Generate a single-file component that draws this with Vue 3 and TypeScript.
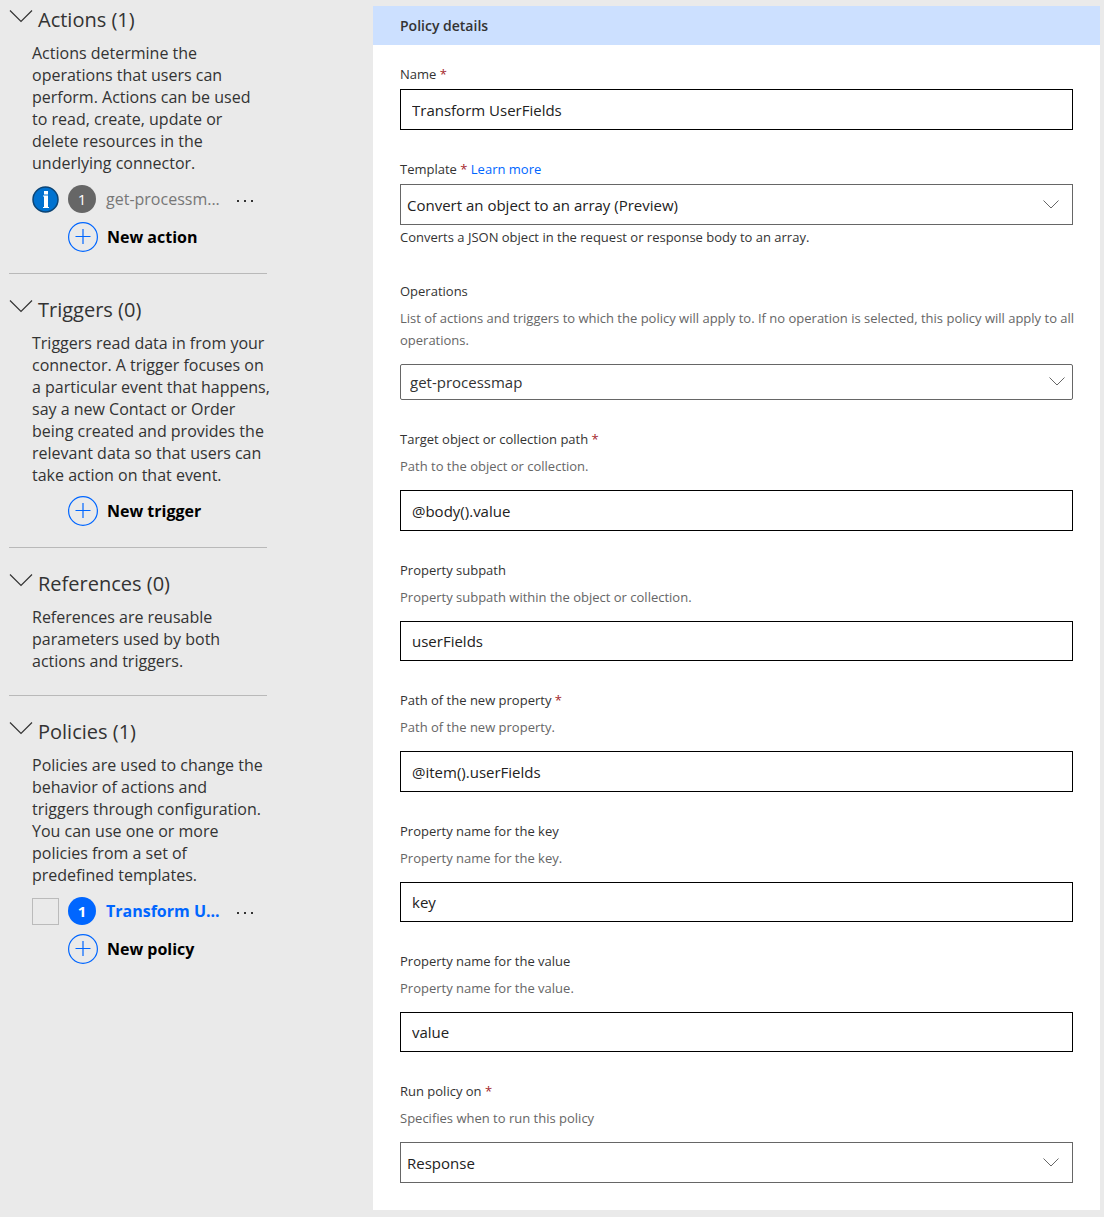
<script setup lang="ts">
import { ref } from 'vue'

interface Item {
  label: string
  active: boolean
}

interface Section {
  title: string
  lines: string[]
  items: Item[]
  add?: string
}

interface Field {
  id: string
  label: string
  required: boolean
  description: string
  value: string
}

const sections: Section[] = [
  {
    title: 'Actions (1)',
    lines: [
      'Actions determine the',
      'operations that users can',
      'perform. Actions can be used',
      'to read, create, update or',
      'delete resources in the',
      'underlying connector.',
    ],
    items: [{ label: 'get-processm...', active: false }],
    add: 'New action',
  },
  {
    title: 'Triggers (0)',
    lines: [
      'Triggers read data in from your',
      'connector. A trigger focuses on',
      'a particular event that happens,',
      'say a new Contact or Order',
      'being created and provides the',
      'relevant data so that users can',
      'take action on that event.',
    ],
    items: [],
    add: 'New trigger',
  },
  {
    title: 'References (0)',
    lines: ['References are reusable', 'parameters used by both', 'actions and triggers.'],
    items: [],
  },
  {
    title: 'Policies (1)',
    lines: [
      'Policies are used to change the',
      'behavior of actions and',
      'triggers through configuration.',
      'You can use one or more',
      'policies from a set of',
      'predefined templates.',
    ],
    items: [{ label: 'Transform U...', active: true }],
    add: 'New policy',
  },
]

const name = ref('Transform UserFields')

const fields = ref<Field[]>([
  {
    id: 'target',
    label: 'Target object or collection path',
    required: true,
    description: 'Path to the object or collection.',
    value: '@body().value',
  },
  {
    id: 'subpath',
    label: 'Property subpath',
    required: false,
    description: 'Property subpath within the object or collection.',
    value: 'userFields',
  },
  {
    id: 'newpath',
    label: 'Path of the new property',
    required: true,
    description: 'Path of the new property.',
    value: '@item().userFields',
  },
  {
    id: 'key',
    label: 'Property name for the key',
    required: false,
    description: 'Property name for the key.',
    value: 'key',
  },
  {
    id: 'value',
    label: 'Property name for the value',
    required: false,
    description: 'Property name for the value.',
    value: 'value',
  },
])
</script>

<template>
  <div class="page">
    <aside class="sidebar">
      <section v-for="s in sections" :key="s.title" class="section">
        <h2 class="heading">
          <svg class="caret" viewBox="0 0 24 14" aria-hidden="true"><path d="M1 1.5 12 12.5 23 1.5" /></svg>
          {{ s.title }}
        </h2>
        <p class="intro">{{ s.lines.join('\n') }}</p>
        <div v-for="i in s.items" :key="i.label" class="row" :class="{ active: i.active }">
          <input v-if="i.active" class="tick" type="checkbox" :aria-label="i.label" />
          <svg v-else class="info" viewBox="0 0 27 27" role="img" aria-label="Information">
            <circle cx="13.5" cy="13.5" r="12.5" />
            <path d="M12 5h4v3.5h-4zM11 9.5h5V21h1v1h-6v-1h1V10.5h-1z" />
          </svg>
          <span class="badge">1</span>
          <a class="name" href="#">{{ i.label }}</a>
          <button class="more" type="button" aria-label="More options">
            <svg viewBox="0 0 18 4" aria-hidden="true">
              <path d="M1 1h2v2H1zM8 1h2v2H8zM15 1h2v2h-2z" />
            </svg>
          </button>
        </div>
        <div v-if="s.add" class="row">
          <button class="add" type="button">
            <svg viewBox="0 0 30 30" aria-hidden="true">
              <circle cx="15" cy="15" r="14.4" />
              <path d="M7.5 14.5h15M15 7v15" />
            </svg>
            {{ s.add }}
          </button>
        </div>
      </section>
    </aside>

    <main class="panel">
      <h1 class="title">Policy details</h1>
      <form class="form" @submit.prevent>
        <div class="field">
          <label class="label" for="name">Name <span class="star">*</span></label>
          <input id="name" v-model="name" class="control" type="text" />
        </div>

        <div class="field">
          <div class="label">
            <label for="template">Template <span class="star">*</span></label>
            {{ ' ' }}<a class="link" href="#">Learn more</a>
          </div>
          <div class="picker">
            <select id="template" class="control">
              <option>Convert an object to an array (Preview)</option>
            </select>
            <svg class="arrow" viewBox="0 0 16 9" aria-hidden="true"><path d="M.5.5 8 8 15.5.5" /></svg>
          </div>
          <p class="helper">Converts a JSON object in the request or response body to an array.</p>
        </div>

        <div class="field">
          <label class="label" for="operations">Operations</label>
          <p class="description">
            List of actions and triggers to which the policy will apply to. If no operation is selected, this
            policy will apply to all operations.
          </p>
          <div class="picker slim">
            <select id="operations" class="control">
              <option>get-processmap</option>
            </select>
            <svg class="arrow" viewBox="0 0 16 9" aria-hidden="true"><path d="M.5.5 8 8 15.5.5" /></svg>
          </div>
        </div>

        <div v-for="f in fields" :key="f.id" class="field" :class="{ optional: !f.required }">
          <label class="label" :for="f.id">{{ f.label }} <span v-if="f.required" class="star">*</span></label>
          <p class="description">{{ f.description }}</p>
          <input :id="f.id" v-model="f.value" class="control" type="text" />
        </div>

        <div class="field">
          <label class="label" for="run">Run policy on <span class="star">*</span></label>
          <p class="description">Specifies when to run this policy</p>
          <div class="picker">
            <select id="run" class="control">
              <option>Response</option>
            </select>
            <svg class="arrow" viewBox="0 0 16 9" aria-hidden="true"><path d="M.5.5 8 8 15.5.5" /></svg>
          </div>
        </div>
      </form>
    </main>
  </div>
</template>

<style>
body {
  background: #eaeaea;
}
</style>

<style scoped>
.page {
  display: flex;
  align-items: flex-start;
  gap: 106px;
  padding: 6px 4px 7px 9px;
  color: #333;
  font-family: 'Open Sans', 'Noto Sans', sans-serif;
}

.page * {
  box-sizing: border-box;
}

.sidebar {
  flex: 0 0 258px;
  min-width: 0;
}

.section {
  padding-bottom: 17px;
}

.section + .section {
  border-top: 1px solid #b9b9b9;
  padding-top: 22px;
}

.heading {
  display: flex;
  align-items: center;
  gap: 5px;
  margin: 0;
  font-size: 20px;
  font-weight: 400;
  line-height: 28px;
}

.caret {
  width: 24px;
  height: 14px;
  margin-bottom: 8px;
  fill: none;
  stroke: #333;
  stroke-width: 1.2;
}

.intro {
  margin: 8px 0 6px 23px;
  font-size: 16px;
  line-height: 22px;
  white-space: pre;
}

.row {
  display: flex;
  align-items: center;
  height: 38px;
  padding-left: 23px;
  font-size: 16px;
}

.tick {
  appearance: none;
  width: 27px;
  height: 27px;
  margin: 0;
  border: 1px solid #bbb;
}

.info {
  width: 27px;
  height: 27px;
}

.info circle {
  fill: #0072d0;
  stroke: #0b4475;
  stroke-width: 1.5;
}

.info path {
  fill: #fff;
}

.badge {
  width: 28px;
  height: 28px;
  margin: 0 10px 0 9px;
  border-radius: 50%;
  background: #666;
  color: #fff;
  font-size: 15px;
  line-height: 28px;
  text-align: center;
}

.name {
  flex: 0 0 130px;
  color: #777;
  text-decoration: none;
}

.active .badge {
  background: #0066ff;
  font-weight: 700;
}

.active .name {
  color: #0066ff;
  font-weight: 700;
}

.more {
  display: flex;
  padding: 4px 0 0;
  border: 0;
  background: none;
}

.more svg {
  width: 18px;
  height: 4px;
  fill: #333;
}

.add {
  display: flex;
  align-items: center;
  gap: 9px;
  margin-left: 36px;
  padding: 0;
  border: 0;
  background: none;
  color: #000;
  font: inherit;
  font-weight: 700;
}

.add svg {
  width: 30px;
  height: 30px;
  fill: none;
  stroke: #0066ff;
  stroke-width: 1.2;
}

.panel {
  flex: 1;
  min-width: 0;
  background: #fff;
}

.title {
  margin: 0;
  padding: 0 27px;
  background: #cce0ff;
  font-size: 14px;
  font-weight: 600;
  line-height: 39px;
}

.form {
  display: flex;
  flex-direction: column;
  gap: 28px;
  padding: 18px 27px 27px;
  font-size: 13px;
  line-height: 22px;
}

.field {
  display: flex;
  flex-direction: column;
}

.label {
  margin-bottom: 4px;
}

.star {
  color: #a4262c;
}

.link {
  color: #0066ff;
  text-decoration: none;
}

.control {
  width: 100%;
  height: 41px;
  margin: 0;
  padding: 0 11px;
  border: 1px solid #000;
  border-radius: 0;
  background: #fff;
  color: #222;
  font-family: inherit;
  font-size: 15px;
}

.optional .control {
  height: 40px;
}

.picker {
  position: relative;
}

.picker .control {
  display: block;
  appearance: none;
  padding: 0 6px;
  border-color: #666;
}

.picker.slim .control {
  height: 36px;
  padding: 0 9px;
  border-radius: 2px;
  color: #333;
}

.arrow {
  position: absolute;
  top: 16px;
  right: 14px;
  width: 16px;
  height: 9px;
  fill: none;
  stroke: #666;
  pointer-events: none;
}

.slim .arrow {
  top: 13px;
  right: 8px;
}

.helper {
  margin: 1px 0 4px;
}

.description {
  margin: 1px -12px 13px 0;
  color: #666;
}
</style>
